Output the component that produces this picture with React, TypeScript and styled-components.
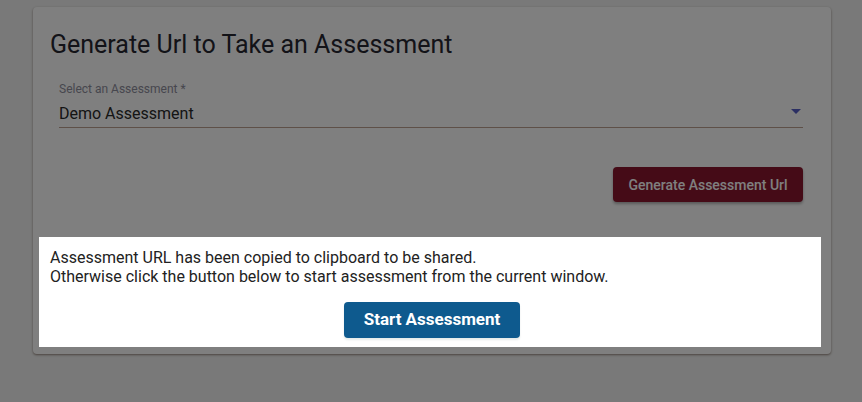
import React from "react";
import styled, { createGlobalStyle } from "styled-components";

const GlobalStyle = createGlobalStyle`
  html, body { margin: 0; padding: 0; }
  body {
    background: #f2f2f2;
    font-family: Roboto, "Liberation Sans", Arial, sans-serif;
    width: 862px;
    height: 402px;
    overflow: hidden;
  }
  * { box-sizing: border-box; }
`;

const Page = styled.div`
  position: relative;
  width: 862px;
  height: 402px;
  padding: 7px 31px 0 33px;
`;

const Card = styled.section`
  background: #ffffff;
  border-radius: 4px;
  height: 347px;
  padding: 23px 28px 0 17px;
  box-shadow: 0 1px 2px rgba(90, 60, 40, 0.45), 0 1px 3px rgba(0, 0, 0, 0.15);
  display: flex;
  flex-direction: column;
`;

const Title = styled.h1`
  margin: 0;
  font-size: 25px;
  font-weight: 400;
  color: #262630;
  line-height: 29px;
`;

const Field = styled.div`
  margin: 23px 0 0 9px;
  display: flex;
  flex-direction: column;
`;

const Label = styled.label`
  font-size: 12px;
  line-height: 14px;
  color: #8e8e9c;
`;

const SelectBox = styled.div`
  margin-top: 7px;
  display: flex;
  align-items: center;
  justify-content: space-between;
  height: 24px;
  border-bottom: 1px solid #bca090;
  box-sizing: content-box;
`;

const Value = styled.span`
  font-size: 16px;
  line-height: 19px;
  color: #2a2a2a;
  margin-top: -4px;
`;

const Arrow = styled.svg`
  width: 24px;
  height: 24px;
  margin-right: -5px;
  margin-top: -8px;
  fill: #565ec6;
`;

const Actions = styled.div`
  display: flex;
  justify-content: flex-end;
  margin-top: 39px;
`;

const GenerateButton = styled.button`
  width: 190px;
  height: 35px;
  border: none;
  border-radius: 4px;
  background: #8a162e;
  color: #ffffff;
  font-family: Roboto, "Liberation Sans", Arial, sans-serif;
  font-size: 14px;
  font-weight: 500;
  box-shadow: 0 2px 3px rgba(0, 0, 0, 0.3);
  cursor: pointer;
`;

const Overlay = styled.div`
  position: fixed;
  inset: 0;
  background: rgba(0, 0, 0, 0.5);
`;

const Popover = styled.div`
  position: absolute;
  left: 39px;
  top: 237px;
  width: 782px;
  height: 110px;
  background: #ffffff;
  padding: 11px 11px 9px;
  display: flex;
  flex-direction: column;
`;

const Message = styled.p`
  margin: 0;
  font-size: 16px;
  line-height: 19px;
  color: #222222;
`;

const Centered = styled.div`
  display: flex;
  justify-content: center;
  margin-top: 16px;
  padding-left: 4px;
`;

const StartButton = styled.button`
  width: 176px;
  height: 36px;
  border: none;
  border-radius: 4px;
  background: #0e5a8e;
  color: #ffffff;
  font-family: Roboto, "Liberation Sans", Arial, sans-serif;
  font-size: 17px;
  font-weight: 700;
  padding: 0 0 2px;
  box-shadow: 0 2px 2px rgba(40, 90, 80, 0.12);
  cursor: pointer;
`;

export default function App() {
  return (
    <>
      <GlobalStyle />
      <Page>
        <Card>
          <Title>Generate Url to Take an Assessment</Title>
          <Field>
            <Label>Select an Assessment *</Label>
            <SelectBox>
              <Value>Demo Assessment</Value>
              <Arrow viewBox="0 0 24 24" aria-hidden="true">
                <path d="M7 10l5 5 5-5z" />
              </Arrow>
            </SelectBox>
          </Field>
          <Actions>
            <GenerateButton>Generate Assessment Url</GenerateButton>
          </Actions>
        </Card>
        <Overlay />
        <Popover>
          <Message>
            Assessment URL has been copied to clipboard to be shared.
            <br />
            Otherwise click the button below to start assessment from the current window.
          </Message>
          <Centered>
            <StartButton>Start Assessment</StartButton>
          </Centered>
        </Popover>
      </Page>
    </>
  );
}
